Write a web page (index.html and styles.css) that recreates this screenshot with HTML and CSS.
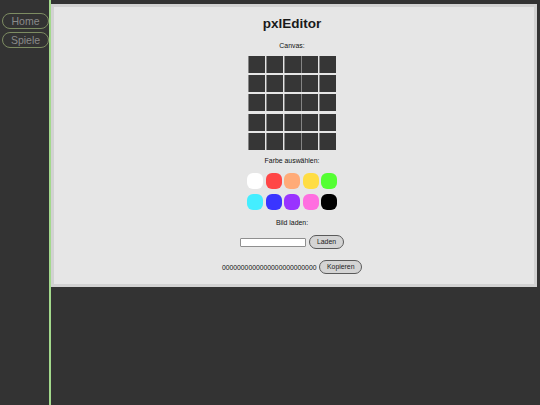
FILE: index.html
```html
<!DOCTYPE html>
<html lang="de">
<head>
<meta charset="utf-8">
<title>pxlEditor</title>
<link rel="stylesheet" href="styles.css">
</head>
<body>
<div class="layout">
  <nav class="sidebar">
    <button class="nav-btn">Home</button>
    <button class="nav-btn">Spiele</button>
  </nav>
  <main class="main">
    <section class="panel">
      <h1 class="title">pxlEditor</h1>
      <div class="label label-canvas">Canvas:</div>
      <div class="canvas">
        <div class="cell"></div><div class="cell"></div><div class="cell"></div><div class="cell"></div><div class="cell"></div>
        <div class="cell"></div><div class="cell"></div><div class="cell"></div><div class="cell"></div><div class="cell"></div>
        <div class="cell"></div><div class="cell"></div><div class="cell"></div><div class="cell"></div><div class="cell"></div>
        <div class="cell"></div><div class="cell"></div><div class="cell"></div><div class="cell"></div><div class="cell"></div>
        <div class="cell"></div><div class="cell"></div><div class="cell"></div><div class="cell"></div><div class="cell"></div>
      </div>
      <div class="label label-colors">Farbe auswählen:</div>
      <div class="palette">
        <div class="swatch c-white"></div>
        <div class="swatch c-red"></div>
        <div class="swatch c-orange"></div>
        <div class="swatch c-yellow"></div>
        <div class="swatch c-green"></div>
        <div class="swatch c-cyan"></div>
        <div class="swatch c-blue"></div>
        <div class="swatch c-purple"></div>
        <div class="swatch c-pink"></div>
        <div class="swatch c-black"></div>
      </div>
      <div class="label label-load">Bild laden:</div>
      <div class="row row-load">
        <input class="text-input" type="text">
        <button class="btn">Laden</button>
      </div>
      <div class="row row-code">
        <span class="code">0000000000000000000000000</span>
        <button class="btn">Kopieren</button>
      </div>
    </section>
  </main>
</div>
</body>
</html>
```

FILE: styles.css
```css
html, body {
  margin: 0;
  padding: 0;
  height: 100%;
  background: #333333;
  font-family: "Liberation Sans", Arial, sans-serif;
}

.layout {
  display: flex;
  height: 100vh;
}

.sidebar {
  width: 47px;
  padding: 13px 0 0 2px;
  border-right: 2px solid #a3d98c;
  display: flex;
  flex-direction: column;
  gap: 3px;
  flex-shrink: 0;
}

.nav-btn {
  height: 16px;
  width: 47px;
  padding: 0;
  background: transparent;
  border: 1px solid #7d8c62;
  border-radius: 8px;
  color: #8a8a8a;
  font-family: "Liberation Sans", Arial, sans-serif;
  font-size: 10.5px;
  line-height: 14px;
}

.main {
  flex: 1;
  padding: 4px 3px 0 0;
}

.panel {
  box-sizing: border-box;
  height: 283px;
  background: #e6e6e6;
  border: 3px solid #d2d2d2;
  padding: 9px 4px 0 0;
  display: flex;
  flex-direction: column;
  align-items: center;
  color: #111;
}

.title {
  margin: 0;
  font-size: 13.5px;
  line-height: 16px;
  font-weight: bold;
  color: #1a1a1a;
}

.label {
  font-size: 6.9px;
  line-height: 9px;
  color: #111;
}

.label-canvas { margin-top: 8.5px; }
.label-colors { margin-top: 6.5px; }
.label-load { margin-top: 8.5px; }

.canvas {
  margin-top: 6.5px;
  display: grid;
  grid-template-columns: repeat(5, 17px);
  grid-auto-rows: 17px;
  column-gap: 0.8px;
  row-gap: 2.2px;
}

.cell {
  box-sizing: border-box;
  background: #363636;
  border-left: 1px solid #858585;
}

.palette {
  margin-top: 7.5px;
  display: grid;
  grid-template-columns: repeat(5, 16px);
  grid-auto-rows: 16px;
  column-gap: 2.5px;
  row-gap: 5px;
}

.swatch { border-radius: 6px; }
.c-white { background: #ffffff; }
.c-red { background: #ff4646; }
.c-orange { background: #ffab78; }
.c-yellow { background: #ffdd44; }
.c-green { background: #55ff33; }
.c-cyan { background: #44eeff; }
.c-blue { background: #3a35ff; }
.c-purple { background: #9933ff; }
.c-pink { background: #ff6ee0; }
.c-black { background: #000000; }

.row {
  display: flex;
  align-items: center;
}

.row-load {
  margin-top: 7.5px;
  gap: 3px;
}

.row-code {
  margin-top: 10.5px;
  gap: 3px;
}

.text-input {
  box-sizing: border-box;
  width: 66px;
  height: 9px;
  margin: 0;
  padding: 0;
  background: #ffffff;
  border: 1px solid #8f8f8f;
  border-radius: 1px;
}

.btn {
  box-sizing: border-box;
  height: 14.5px;
  margin: 0;
  padding: 0 6.5px;
  background: #d4d4d4;
  border: 1px solid #5a5a5a;
  border-radius: 8px;
  color: #222;
  font-family: "Liberation Sans", Arial, sans-serif;
  font-size: 6.9px;
  line-height: 12px;
}

.code {
  font-size: 6.8px;
  line-height: 9px;
  color: #111;
}
```
